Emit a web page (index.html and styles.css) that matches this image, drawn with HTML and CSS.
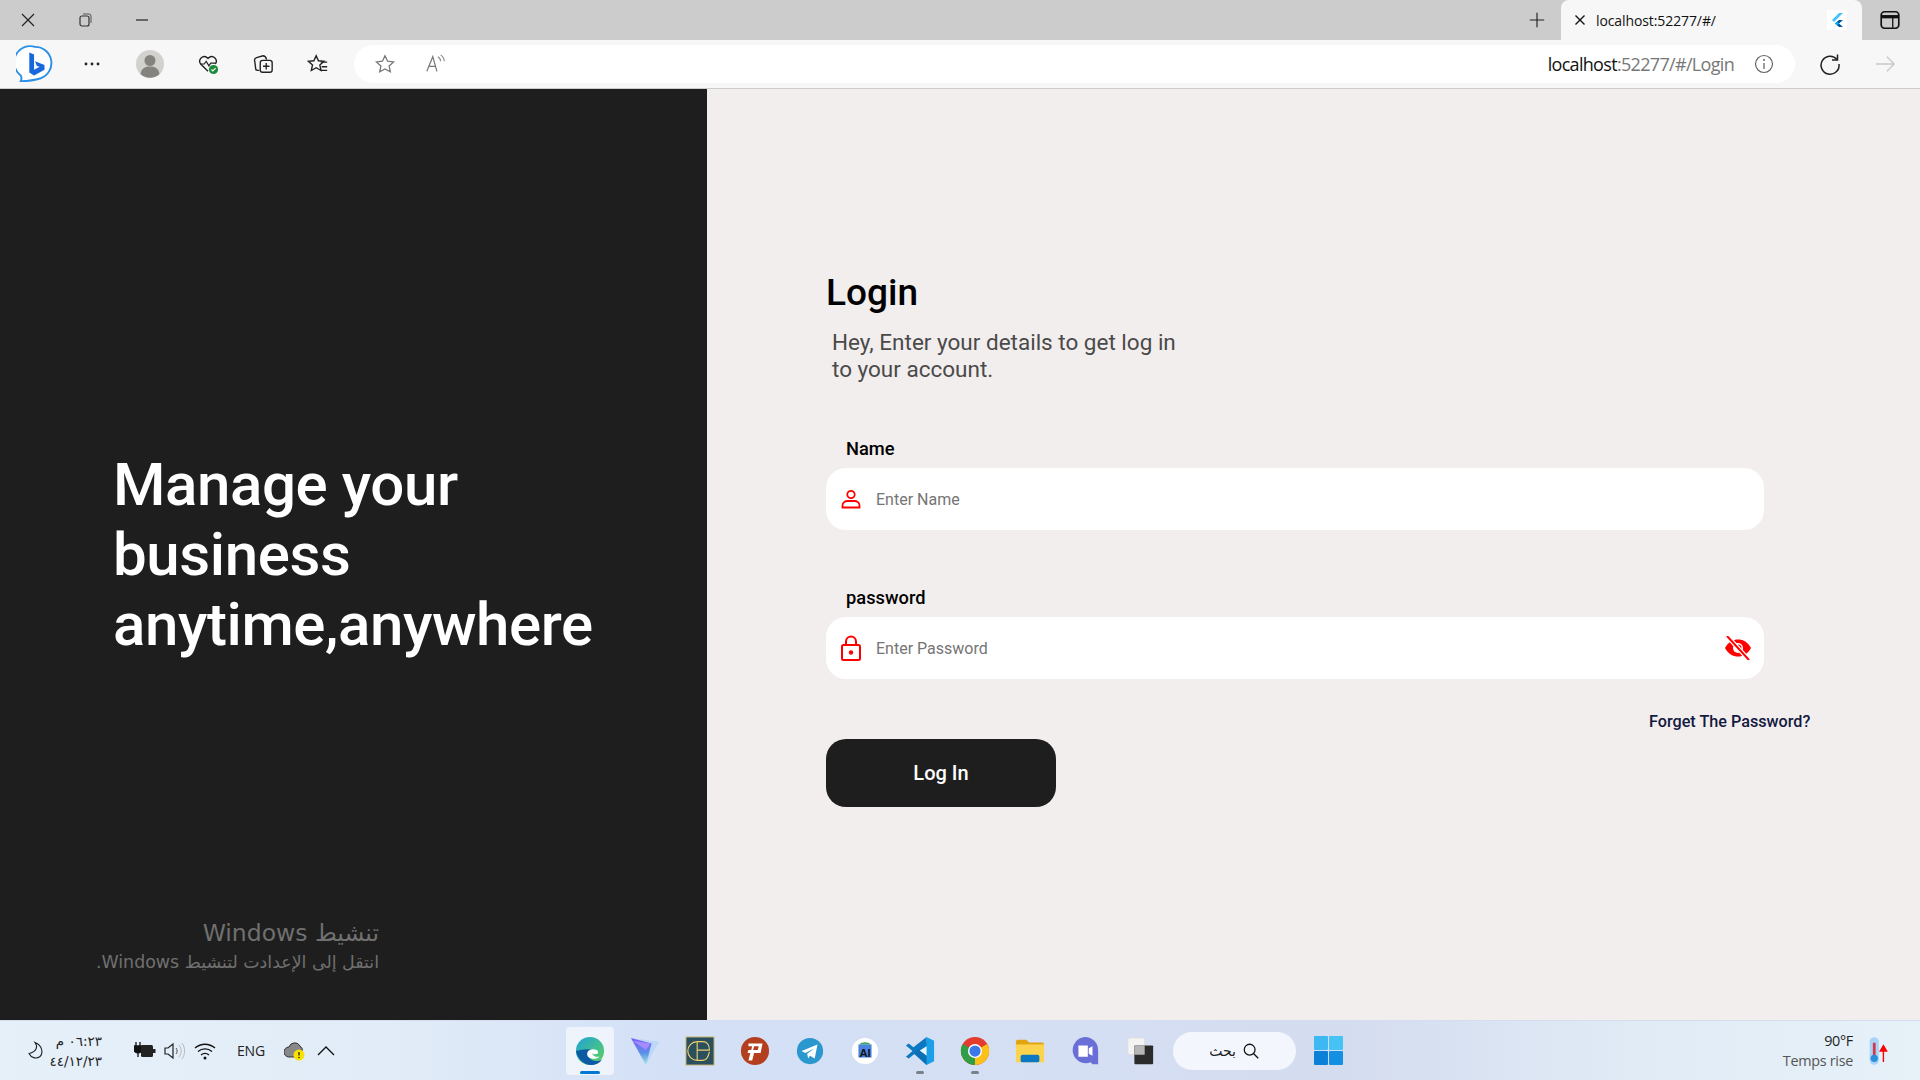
FILE: index.html
```html
<!DOCTYPE html>
<html lang="en">
<head>
    <meta charset="UTF-8">
    <meta name="viewport" content="width=device-width, initial-scale=1.0">
    <title>Login</title>
    <link rel="stylesheet" href="styles.css">
</head>
<body>
    <div class="tabbar">
        <div class="window-btns">
            <svg class="icon-20" viewBox="0 0 20 20"><path d="M4 4l12 12M16 4L4 16" fill="none" stroke="#222" stroke-width="1.2"/></svg>
            <svg class="icon-20" viewBox="0 0 20 20"><rect x="5" y="6" width="9" height="10" rx="2" fill="none" stroke="#333" stroke-width="1.2"/><path d="M8 4h6a2 2 0 0 1 2 2v7" fill="none" stroke="#555"/></svg>
            <svg class="icon-20" viewBox="0 0 20 20"><path d="M4 10h12" stroke="#222" stroke-width="1.2"/></svg>
        </div>
        <svg class="new-tab" viewBox="0 0 20 20"><path d="M10 2v16M2 10h16" stroke="#222" stroke-width="1.3"/></svg>
        <div class="tab">
            <svg class="tab-close" viewBox="0 0 12 12"><path d="M1.5 1.5l9 9M10.5 1.5l-9 9" stroke="#111" stroke-width="1.4"/></svg>
            <span class="tab-title">localhost:52277/#/</span>
            <svg class="tab-flutter" viewBox="0 0 20 20"><rect width="20" height="20" fill="#fff"/><path d="M12 3L5 10l2 2 9-9z" fill="#47c5fb"/><path d="M12 10l-4 3.500 4 3.500h4l-4-3.500 4-3.500z" fill="#00569e"/><path d="M10 11.800l2 1.700-2 1.700-2-1.700z" fill="#00b5f8"/></svg>
        </div>
        <svg class="panel-btn" viewBox="0 0 20 20"><rect x="2" y="2.500" width="16" height="15" rx="3" fill="none" stroke="#111" stroke-width="1.500"/><path d="M2 7h16" stroke="#111" stroke-width="3"/><path d="M12.500 7v10" stroke="#111" stroke-width="1.200"/></svg>
    </div>

    <div class="toolbar">
        <svg class="bing" viewBox="0 0 40 40"><path d="M20 2a17 17 0 0 1 6 33c-6 2-13 3-21 3 1-2 1-4 0-6A17 17 0 0 1 20 2z" fill="#fff" stroke="#2a8fe6" stroke-width="2"/><path d="M14 8l5 2v16l6-3-3-1-2-5 10 4v5l-11 6-5-3z" fill="#1668dc"/></svg>
        <svg class="dots" viewBox="0 0 20 6"><circle cx="4" cy="3" r="1.400" fill="#222"/><circle cx="10" cy="3" r="1.400" fill="#222"/><circle cx="16" cy="3" r="1.400" fill="#222"/></svg>
        <svg class="avatar" viewBox="0 0 28 28"><circle cx="14" cy="14" r="14" fill="#d2d1cd"/><circle cx="14" cy="10.500" r="5.500" fill="#85837e"/><path d="M4.500 24c1-6 5-7.500 9.500-7.500S22.500 18 23.500 24a14 14 0 0 1-19 0z" fill="#85837e"/></svg>
        <svg class="tool-icon heart" viewBox="0 0 24 24"><path d="M12 20L4 12a5 5 0 0 1 7-7l1 1 1-1a5 5 0 0 1 7 7" fill="none" stroke="#222" stroke-width="1.500"/><path d="M4 12h4l2-3 3 5 2-3h5" fill="none" stroke="#222" stroke-width="1.300"/><circle cx="18" cy="18" r="5" fill="#1c8a3b"/><path d="M15.800 18l1.500 1.500 3-3" fill="none" stroke="#fff" stroke-width="1.200"/></svg>
        <svg class="tool-icon coll" viewBox="0 0 24 24"><rect x="9" y="8" width="13" height="13" rx="2.500" fill="none" stroke="#222" stroke-width="1.500"/><path d="M15.500 11v7M12 14.500h7" stroke="#222" stroke-width="1.500"/><path d="M8 19H6a2 2 0 0 1-2-2l-1-8a3 3 0 0 1 2-4l7-2c2 0 3 1 4 4" fill="none" stroke="#222" stroke-width="1.500"/></svg>
        <svg class="tool-icon favs" viewBox="0 0 24 24"><path d="M10 3l2.500 5.500 6 .6-4.500 4 1.300 6-5.300-3-5.300 3 1.300-6-4.500-4 6-.6z" fill="none" stroke="#222" stroke-width="1.500"/><path d="M15 10h7M16 15h6M15 19h7" stroke="#222" stroke-width="1.400"/></svg>
        <div class="address">
            <svg class="addr-star" viewBox="0 0 24 24"><path d="M12 3l2.800 6 6.500.7-4.800 4.400 1.300 6.400-5.800-3.200-5.800 3.200 1.300-6.400L2.700 9.700 9.200 9z" fill="none" stroke="#777" stroke-width="1.400"/></svg>
            <svg class="addr-read" viewBox="0 0 24 24"><path d="M2 20L8.500 4 13 20M4.500 14.500h7" fill="none" stroke="#777" stroke-width="1.300"/><path d="M14 4c2 1 3 3 3 5M17 2c3 2 4 4 4 7" fill="none" stroke="#888" stroke-width="1.200"/></svg>
            <span class="url"><span class="url-host">localhost</span>:52277/#/Login</span>
            <svg class="addr-info" viewBox="0 0 20 20"><circle cx="10" cy="10" r="8.500" fill="none" stroke="#666" stroke-width="1.200"/><path d="M10 9v6" stroke="#666" stroke-width="1.300"/><circle cx="10" cy="6" r="1" fill="#666"/></svg>
        </div>
        <svg class="reload" viewBox="0 0 24 24"><path d="M19 7.500A9 9 0 1 0 21 12" fill="none" stroke="#222" stroke-width="1.500"/><path d="M19.500 2.500v5.500H14" fill="none" stroke="#222" stroke-width="1.500"/></svg>
        <svg class="forward" viewBox="0 0 24 24"><path d="M2 12h20M14 4l8 8-8 8" fill="none" stroke="#c9c9c9" stroke-width="1.500"/></svg>
    </div>

    <main class="app">
        <section class="hero">
            <h1>Manage your<br>business<br>anytime,anywhere</h1>
            <div class="watermark" dir="rtl">
                <div class="wm-title">تنشيط Windows</div>
                <div class="wm-sub">انتقل إلى الإعدادت لتنشيط Windows.</div>
            </div>
        </section>
        <section class="login">
            <h2>Login</h2>
            <p class="subtitle">Hey, Enter your details to get log in<br>to your account.</p>

            <label class="field-label">Name</label>
            <div class="field">
                <svg class="field-icon" viewBox="0 0 20 20"><circle cx="10" cy="5.500" r="3.700" fill="none" stroke="#f00" stroke-width="1.800"/><path d="M1.500 18.500v-2c0-3 2.500-4.500 5-4.500h7c2.500 0 5 1.500 5 4.500v2z" fill="none" stroke="#f00" stroke-width="1.800"/></svg>
                <span class="placeholder">Enter Name</span>
            </div>

            <label class="field-label second">password</label>
            <div class="field">
                <svg class="field-icon lock" viewBox="0 0 20 26"><rect x="1" y="10" width="18" height="15" rx="1.500" fill="none" stroke="#f00" stroke-width="2"/><path d="M5 10V6.500a5 5 0 0 1 10 0V10" fill="none" stroke="#f00" stroke-width="2"/><circle cx="10" cy="17.500" r="2.200" fill="#f00"/></svg>
                <span class="placeholder">Enter Password</span>
                <svg class="eye" viewBox="0 0 28 24"><path d="M1 12C4 6 9 3.500 14 3.500S24 6 27 12c-3 6-8 8.500-13 8.500S4 18 1 12z" fill="#f00"/><circle cx="14" cy="12" r="5" fill="#fff"/><path d="M14 8.500a3.500 3.500 0 0 1 0 7z" fill="#f00"/><path d="M3 0l22 24" stroke="#fff" stroke-width="4.500"/><path d="M3 0l22 24" stroke="#f00" stroke-width="2"/></svg>
            </div>

            <a class="forgot">Forget The Password?</a>
            <button class="login-btn">Log In</button>
        </section>
    </main>

    <footer class="taskbar">
        <div class="tray">
            <svg class="moon" viewBox="0 0 20 20"><path d="M10 2c3 4 2 9-6 11 2 4 7 6 11 3 3-3 3-11-5-14z" fill="none" stroke="#222" stroke-width="1.100"/></svg>
            <div class="clock" dir="rtl"><div>٠٦:٢٣ م</div><div>٤٤/١٢/٢٣</div></div>
            <svg class="tray-plug" viewBox="0 0 22 18"><path d="M2 0v4M6 0v4M0 4h8v3a4 4 0 0 1-8 0zM4 11v4" stroke="#111" stroke-width="1.300" fill="#111"/><rect x="7" y="3" width="12" height="12" rx="1.500" fill="#222"/><rect x="19" y="7" width="2.500" height="4" fill="#222"/></svg>
            <svg class="tray-sound" viewBox="0 0 22 18"><path d="M1 6h3l5-4v14l-5-4H1z" fill="none" stroke="#222" stroke-width="1.200"/><path d="M12 6c1.500 2 1.500 4 0 6" fill="none" stroke="#555"/><path d="M15 3c3 4 3 8 0 12M18 1c3.500 5 3.500 11 0 16" fill="none" stroke="#bbb"/></svg>
            <svg class="tray-wifi" viewBox="0 0 22 18"><path d="M1 6c6-5 14-5 20 0M4 9.500c4-3.500 10-3.500 14 0M7 13c2.500-2 5.500-2 8 0" fill="none" stroke="#111" stroke-width="1.400"/><circle cx="11" cy="16" r="1.500" fill="#111"/></svg>
            <span class="lang">ENG</span>
            <svg class="tray-cloud" viewBox="0 0 22 20"><path d="M5 16a5 5 0 0 1 0-10 6 6 0 0 1 11-1 5 5 0 0 1 2 6l-3 5z" fill="#888" stroke="#333" stroke-width="1"/><circle cx="15" cy="14" r="5.500" fill="#fbe100"/><path d="M15 11v3.500" stroke="#222" stroke-width="1.300"/><circle cx="15" cy="16.500" r=".8" fill="#222"/></svg>
            <svg class="tray-chevron" viewBox="0 0 18 10"><path d="M1 9l8-8 8 8" fill="none" stroke="#111" stroke-width="1.300"/></svg>
        </div>

        <div class="apps">
            <div class="app-cell active">
                <svg viewBox="0 0 32 32"><defs><linearGradient id="edgeTop" x1="0" y1="0" x2="1" y2="1"><stop offset="0" stop-color="#1fa2d8"/><stop offset="1" stop-color="#5fd35c"/></linearGradient></defs><circle cx="16" cy="16" r="15" fill="url(#edgeTop)"/><path d="M1 16c2 10 10 15 16 15 5 0 9-2 12-6-5 3-12 2-14-2-2-3 0-7 4-8-7-2-14 0-18 1z" fill="#0c59a4"/><path d="M13 18c1-4 7-5 10-3 2 1 2 3 1 4-3 1-5 0-6-1 1 3 4 5 8 4-3 3-9 3-12 0-1-1-1-3-1-4z" fill="#fff"/></svg>
            </div>
            <div class="app-cell">
                <svg viewBox="0 0 32 32"><defs><linearGradient id="protonFade" x1="0" y1="0" x2="0" y2="1"><stop offset="0" stop-color="#7d5cff"/><stop offset=".55" stop-color="#5b8fe8"/><stop offset="1" stop-color="#9ff0e6"/></linearGradient></defs><path d="M1 2l30 4-14 25z" fill="#bcd7f7"/><path d="M1 2l22 6-6 23z" fill="url(#protonFade)"/><path d="M3 5l19 3-5 7z" fill="#a68bff"/></svg>
            </div>
            <div class="app-cell">
                <svg viewBox="0 0 32 32"><rect x="1" y="1" width="30" height="30" fill="#2c4f5e" stroke="#d7c276"/><path d="M13 6a10 10 0 0 0 0 20" fill="none" stroke="#ecd06f" stroke-width="1.200"/><path d="M13 6v20M13 15h13c0-6-3-9-7-9h-6M26 17c-1 5-3 9-7 9h-6" fill="none" stroke="#ecd06f" stroke-width="1.200"/></svg>
            </div>
            <div class="app-cell">
                <svg viewBox="0 0 32 32"><circle cx="16" cy="16" r="15" fill="#b43f1f"/><path d="M9 8h15l-2 10h-7l-2 8h-4l2-8h-3l1-3h3l1-4h-4zM15 11l-1 4h5l1-4z" fill="#fff"/></svg>
            </div>
            <div class="app-cell">
                <svg viewBox="0 0 32 32"><circle cx="16" cy="16" r="14" fill="#2a97cf"/><path d="M7 16l17-7-3 15-5-3-2 3-1-5 8-6-10 5z" fill="#fff"/></svg>
            </div>
            <div class="app-cell">
                <svg viewBox="0 0 32 32"><circle cx="16" cy="16" r="14" fill="#fff"/><rect x="9" y="9" width="14" height="14" fill="#4a84e0"/><path d="M10 9c2-3 10-3 12 0z" fill="#3ca36a"/><text x="16" y="22" class="as-text" text-anchor="middle">AI</text></svg>
            </div>
            <div class="app-cell dotted">
                <svg viewBox="0 0 32 32"><path d="M23 1l8 4v22l-8 4-14-13 14-11z" fill="#1a9fe8"/><path d="M23 1v10L9 20l-5 4-3-2 7-6-7-6 3-2 5 4z" fill="#0a78c2"/><path d="M23 11v10l-8-5z" fill="#fff" opacity=".9"/><path d="M23 21v10L9 18l5-4z" fill="#0a6fb5"/></svg>
            </div>
            <div class="app-cell dotted">
                <svg viewBox="0 0 32 32"><circle cx="16" cy="16" r="15" fill="#e33b2e"/><path d="M16 16L29 8.500A15 15 0 0 1 16 31z" fill="#fbc116"/><path d="M16 16v15A15 15 0 0 1 3 8.500z" fill="#2f9e44"/><circle cx="16" cy="16" r="7.500" fill="#fff"/><circle cx="16" cy="16" r="6" fill="#3b78e7"/></svg>
            </div>
            <div class="app-cell">
                <svg viewBox="0 0 32 32"><path d="M1 6a2 2 0 0 1 2-2h9l3 3h14a2 2 0 0 1 2 2v3H1z" fill="#e0a410"/><rect x="1" y="9" width="30" height="19" fill="#fcd34d"/><rect x="6" y="20" width="20" height="8" rx="2" fill="#0a78c2"/></svg>
            </div>
            <div class="app-cell">
                <svg viewBox="0 0 32 32"><path d="M16 1a14 14 0 0 1 14 14v15h-6l-2-2a14 14 0 1 1-6-27z" fill="#6a6fd8"/><path d="M9 10h10v12H9zM20 13l4-2v10l-4-2z" fill="#fff"/></svg>
            </div>
            <div class="app-cell">
                <svg viewBox="0 0 32 32"><rect x="3" y="2" width="18" height="18" rx="2" fill="#f3f3f3" stroke="#ddd"/><rect x="10" y="10" width="20" height="20" rx="1" fill="#2b2b2b"/><rect x="10" y="10" width="11" height="10" fill="#b5b5b5"/></svg>
            </div>
            <div class="search">
                <span class="search-text">بحث</span>
                <svg viewBox="0 0 20 20"><circle cx="8.500" cy="8.500" r="6" fill="none" stroke="#111" stroke-width="1.400"/><path d="M13 13l5 5" stroke="#111" stroke-width="1.500"/></svg>
            </div>
            <div class="app-cell start">
                <svg viewBox="0 0 28 28"><rect x="0" y="0" width="13.500" height="13.500" rx="1" fill="#3cb8f2"/><rect x="14.500" y="0" width="13.500" height="13.500" rx="1" fill="#45c3f5"/><rect x="0" y="14.500" width="13.500" height="13.500" rx="1" fill="#0c7fd6"/><rect x="14.500" y="14.500" width="13.500" height="13.500" rx="1" fill="#1490e3"/></svg>
            </div>
        </div>

        <div class="weather">
            <div class="weather-text"><div class="temp">90°F</div><div class="temp-note">Temps rise</div></div>
            <svg viewBox="0 0 24 32"><rect x="4" y="1" width="10" height="30" rx="5" fill="#a9d3f7"/><rect x="7.500" y="7" width="3" height="14" fill="#d23a4a"/><circle cx="9" cy="24" r="4" fill="#2b8fdc"/><path d="M19 28V12M15.500 16l3.500-6 3.500 6z" fill="#f00" stroke="#f00" stroke-width="1.500"/></svg>
        </div>
    </footer>
</body>
</html>
```

FILE: styles.css
```css
* {
    box-sizing: border-box;
}

body {
    display: flex;
    flex-direction: column;
    height: 100vh;
    margin: 0;
    overflow: hidden;
    font-family: Roboto, Arial, sans-serif;
    background-color: #f2eeee;
}

/* browser chrome */
.tabbar {
    display: flex;
    align-items: center;
    height: 40px;
    flex-shrink: 0;
    background-color: #cccccc;
}

.window-btns {
    display: flex;
    gap: 37px;
    padding-left: 18px;
}

.icon-20 {
    width: 20px;
    height: 20px;
}

.new-tab {
    width: 18px;
    height: 18px;
    margin-left: auto;
}

.tab {
    display: flex;
    align-items: center;
    align-self: stretch;
    width: 301px;
    margin-left: 15px;
    padding: 0 14px 0 13px;
    background-color: #f7f7f7;
    border-radius: 8px 8px 0 0;
    font-family: "Open Sans", Arial, sans-serif;
    font-size: 14px;
    letter-spacing: -0.1px;
    color: #111;
}

.tab-close {
    width: 12px;
    height: 12px;
}

.tab-title {
    margin-left: 10px;
}

.tab-flutter {
    width: 20px;
    height: 20px;
    margin-left: auto;
    margin-right: 1px;
}

.panel-btn {
    width: 22px;
    height: 22px;
    margin: 0 19px 0 17px;
}

.toolbar {
    display: flex;
    align-items: center;
    height: 49px;
    flex-shrink: 0;
    padding-left: 16px;
    background-color: #f7f7f7;
    border-bottom: 1px solid #cccccc;
}

.bing {
    width: 38px;
    height: 40px;
}

.dots {
    width: 20px;
    height: 6px;
    margin-left: 28px;
}

.avatar {
    width: 28px;
    height: 32px;
    margin-left: 34px;
}

.tool-icon {
    width: 22px;
    height: 22px;
}

.heart {
    margin-left: 33px;
}

.coll,
.favs {
    margin-left: 33px;
}

.address {
    display: flex;
    align-items: center;
    width: 1441px;
    height: 38px;
    margin-left: 25px;
    padding: 0 21px 0 20px;
    background-color: #ffffff;
    border-radius: 19px;
    font-family: "Open Sans", Arial, sans-serif;
    font-size: 18px;
    letter-spacing: -0.68px;
    color: #777;
}

.addr-star {
    width: 22px;
    height: 22px;
}

.addr-read {
    width: 22px;
    height: 22px;
    margin-left: 29px;
}

.url {
    margin-left: auto;
}

.url-host {
    color: #111;
}

.addr-info {
    width: 20px;
    height: 20px;
    margin-left: 20px;
}

.reload {
    width: 24px;
    height: 24px;
    margin-left: 23px;
}

.forward {
    width: 22px;
    height: 22px;
    margin-left: 32px;
}

/* page */
.app {
    display: flex;
    flex: 1;
    min-height: 0;
}

.hero {
    position: relative;
    display: flex;
    align-items: center;
    width: 707px;
    padding-left: 113px;
    background-color: #1e1e1e;
}

h1 {
    margin: 0;
    font-size: 60px;
    line-height: 70px;
    font-weight: 500;
    letter-spacing: -0.4px;
    color: #ffffff;
}

.watermark {
    position: absolute;
    right: 328px;
    bottom: 46px;
    width: 320px;
    font-family: "DejaVu Sans", sans-serif;
    color: #707070;
}

.wm-title {
    font-size: 23.500px;
    line-height: 30px;
}

.wm-sub {
    margin-top: 2px;
    font-size: 17.400px;
    line-height: 24px;
}

.login {
    display: flex;
    flex-direction: column;
    align-items: flex-start;
    flex: 1;
    padding: 182px 0 0 119px;
}

h2 {
    margin: 0;
    font-size: 37px;
    line-height: 44px;
    font-weight: 500;
    color: #000000;
}

.subtitle {
    margin: 14px 0 0 6px;
    font-size: 22.500px;
    line-height: 27px;
    color: #4a4a4a;
}

.field-label {
    margin: 54px 0 7px 20px;
    font-size: 18.300px;
    line-height: 24px;
    font-weight: 500;
    color: #000000;
}

.field-label.second {
    margin-top: 56px;
    margin-bottom: 7px;
}

.field {
    display: flex;
    align-items: center;
    width: 938px;
    height: 62px;
    padding: 0 12px 0 15px;
    background-color: #ffffff;
    border-radius: 20px;
}

.field-icon {
    width: 20px;
    height: 20px;
}

.field-icon.lock {
    height: 26px;
}

.placeholder {
    margin-left: 15px;
    font-size: 16px;
    color: #757575;
}

.eye {
    width: 28px;
    height: 24px;
    margin-left: auto;
}

.forgot {
    margin: 33px 0 0 823px;
    font-size: 16.200px;
    line-height: 20px;
    font-weight: 500;
    white-space: nowrap;
    color: #14193f;
}

.login-btn {
    width: 230px;
    height: 68px;
    margin-top: 7px;
    border: none;
    border-radius: 20px;
    background-color: #1e1e1e;
    font-family: inherit;
    font-size: 20px;
    font-weight: 500;
    color: white;
}

/* taskbar */
.taskbar {
    display: flex;
    align-items: center;
    height: 60px;
    flex-shrink: 0;
    color: #222;
    background: linear-gradient(90deg, #e5f0f9 0%, #e2ecf8 20%, #d3e0f6 35%, #d5dff3 55%, #d4dcef 70%, #e0ebf6 85%, #e6f1f8 100%);
    border-top: 1px solid #d5deee;
}

.tray {
    display: flex;
    align-items: center;
    width: 566px;
    padding-left: 25px;
}

.moon {
    width: 20px;
    height: 23px;
}

.clock {
    width: 56px;
    margin-left: 1px;
    font-family: "DejaVu Sans", sans-serif;
    font-size: 13.500px;
    line-height: 20px;
    text-align: right;
}

.tray-plug,
.tray-sound,
.tray-wifi {
    width: 22px;
    height: 18px;
}

.tray-plug {
    margin-left: 32px;
}

.tray-sound,
.tray-wifi {
    margin-left: 8px;
}

.lang {
    margin-left: 21px;
    font-family: "Open Sans", Arial, sans-serif;
    font-size: 14px;
    letter-spacing: -0.2px;
}

.tray-cloud {
    width: 22px;
    height: 20px;
    margin-left: 19px;
}

.tray-chevron {
    width: 18px;
    height: 10px;
    margin-left: 11px;
}

.apps {
    display: flex;
    align-items: center;
}

.app-cell {
    position: relative;
    display: flex;
    align-items: center;
    justify-content: center;
    width: 48px;
    height: 48px;
    margin-right: 7px;
    border-radius: 4px;
}

.app-cell svg {
    width: 30px;
    height: 30px;
}

.app-cell.active {
    background-color: #eef3fc;
}

.app-cell.active::after {
    content: "";
    position: absolute;
    bottom: 1px;
    left: 14px;
    width: 20px;
    height: 3px;
    border-radius: 2px;
    background-color: #0078d4;
}

.app-cell.dotted::after {
    content: "";
    position: absolute;
    bottom: 1px;
    left: 20px;
    width: 8px;
    height: 3px;
    border-radius: 2px;
    background-color: #7a7f8a;
}

.as-text {
    font-family: "Liberation Sans", sans-serif;
    font-size: 12px;
    font-weight: 700;
    fill: #111;
}

.search {
    display: flex;
    align-items: center;
    justify-content: center;
    gap: 6px;
    width: 123px;
    height: 38px;
    margin-left: 2px;
    border-radius: 19px;
    background-color: #f3f6fd;
    font-family: "DejaVu Sans", sans-serif;
    font-size: 14px;
}

.search svg {
    width: 18px;
    height: 18px;
}

.app-cell.start {
    margin-left: 8px;
}

.app-cell.start svg {
    width: 29px;
    height: 29px;
}

.weather {
    display: flex;
    align-items: center;
    gap: 13px;
    margin-left: auto;
    padding-right: 32px;
}

.weather svg {
    width: 22px;
    height: 30px;
}

.weather-text {
    font-family: "Open Sans", Arial, sans-serif;
    font-size: 14.400px;
    line-height: 20px;
    letter-spacing: -0.3px;
    text-align: right;
}

.temp-note {
    color: #555;
}
```
